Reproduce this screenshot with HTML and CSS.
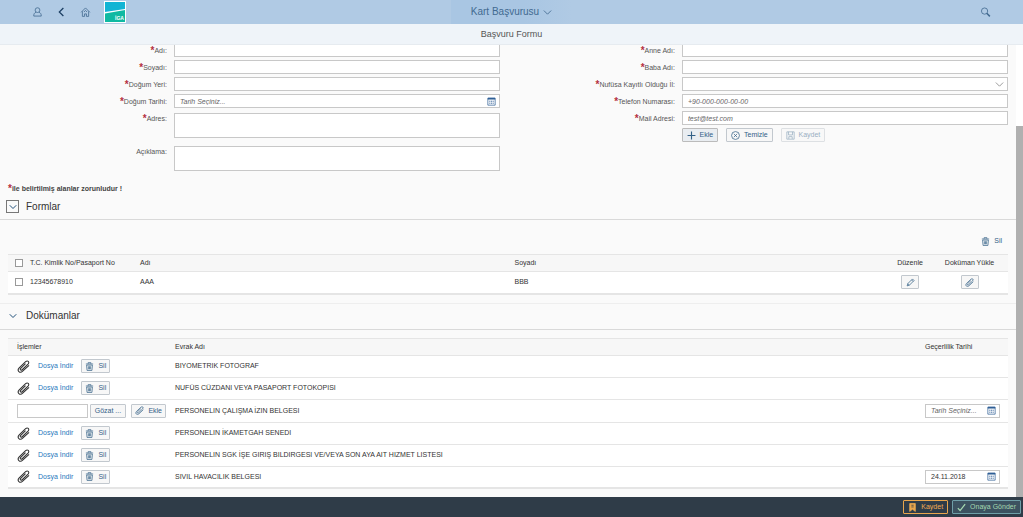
FILE: index.html
```html
<!DOCTYPE html>
<html lang="tr">
<head>
<meta charset="utf-8">
<title>Kart Başvurusu</title>
<link rel="stylesheet" href="styles.css">
</head>
<body>
<svg class="sprite" aria-hidden="true">
  <symbol id="clip" viewBox="0 0 16 16"><path d="M10.500 4.500 4.600 10.200c-1.500 1.700.2 3.300 1.800 1.800l7.200-7c2.400-2.600-.6-5-3-2.900L2.700 9.600c-3.300 3.500.8 7.300 4.300 4.200L14.800 6.500"/></symbol>
  <symbol id="trash" viewBox="0 0 16 16"><path d="M1.500 3.500h13M5.500 3V1.200h5V3M2.800 5.500l.9 9.500h8.600l.9-9.500zM6 7.500V13M8 7.500V13M10 7.500V13"/></symbol>
  <symbol id="cal" viewBox="0 0 16 16"><path d="M1.500 2h13v12.500h-13z"/><path d="M1.500 3h13" stroke-width="3"/><path d="M4 7.500h2M7 7.500h2M10 7.500h2M4 11h2M7 11h2M10 11h2" stroke-width="1.600"/></symbol>
  <symbol id="down" viewBox="0 0 16 16"><path d="m1.500 4.500 6.500 6.500 6.500-6.500"/></symbol>
</svg>
<header class="shell">
  <nav class="shell-nav">
    <button class="shell-btn" aria-label="Kullanıcı"><svg viewBox="0 0 16 16"><circle cx="8" cy="5" r="3.800"/><path d="M5.500 8.500C3 9.500 2 11 2 14.500h12c0-3.500-1-5-3.500-6"/></svg></button>
    <button class="shell-btn back" aria-label="Geri"><svg viewBox="0 0 16 16"><path d="M11 1.500 4.500 8l6.500 6.500"/></svg></button>
    <button class="shell-btn" aria-label="Ana sayfa"><svg viewBox="0 0 16 16"><path d="M1 8.500 8 1.500l7 7M3 7v8h3.500v-4h3v4H13V7M5.500 8 8 5.500 10.500 8"/></svg></button>
    <a class="logo" href="#" aria-label="İGA"><svg viewBox="0 0 22 22"><path fill="#fff" d="M0 0h22v22H0z"/><path fill="#12b4d4" d="M1 1h20v7L1 11z"/><path fill="#0fb9a2" d="M1 12.500 21 9v12H1z"/><text x="11" y="19">İGA</text></svg></a>
  </nav>
  <button class="app-title">Kart Başvurusu <svg><use href="#down"/></svg></button>
  <div class="shell-end"><button class="shell-btn" aria-label="Ara"><svg viewBox="0 0 16 16"><circle cx="6.500" cy="6.500" r="5"/><path d="m10 10 5 5" stroke-width="2.400"/></svg></button></div>
</header>
<h1 class="page-title">Başvuru Formu</h1>
<main class="content">
  <div class="page">
    <form class="form">
      <div class="form-col">
        <div class="field"><label class="req" for="ad">Adı:</label><input id="ad"></div>
        <div class="field"><label class="req" for="soyad">Soyadı:</label><input id="soyad"></div>
        <div class="field"><label class="req" for="yer">Doğum Yeri:</label><input id="yer"></div>
        <div class="field"><label class="req" for="tarih">Doğum Tarihi:</label><span class="combo"><input id="tarih" placeholder="Tarih Seçiniz..."><svg class="icon"><use href="#cal"/></svg></span></div>
        <div class="field tall"><label class="req" for="adres">Adres:</label><textarea id="adres"></textarea></div>
        <div class="field tall"><label for="aciklama">Açıklama:</label><textarea id="aciklama"></textarea></div>
      </div>
      <div class="form-col">
        <div class="field"><label class="req" for="anne">Anne Adı:</label><input id="anne"></div>
        <div class="field"><label class="req" for="baba">Baba Adı:</label><input id="baba"></div>
        <div class="field"><label class="req" for="il">Nufüsa Kayıtlı Olduğu İl:</label><span class="combo"><select id="il"><option></option></select><svg class="icon gray"><use href="#down"/></svg></span></div>
        <div class="field"><label class="req" for="tel">Telefon Numarası:</label><input id="tel" placeholder="+90-000-000-00-00"></div>
        <div class="field"><label class="req" for="mail">Mail Adresi:</label><input id="mail" placeholder="test@test.com"></div>
        <div class="form-actions">
          <button type="button" class="btn pressed"><svg class="icon" viewBox="0 0 16 16"><path d="M8 1v14M1 8h14" stroke-width="2"/></svg>Ekle</button>
          <button type="button" class="btn"><svg class="icon" viewBox="0 0 16 16"><circle cx="8" cy="8" r="7"/><path d="m5 5 6 6M11 5l-6 6"/></svg>Temizle</button>
          <button type="button" class="btn" disabled><svg class="icon" viewBox="0 0 16 16"><path d="M1.500 1.500h13v13h-13zM4.500 1.500V7h7V1.500M5 14v-4h6v4"/></svg>Kaydet</button>
        </div>
      </div>
    </form>
    <p class="note req">ile belirtilmiş alanlar zorunludur !</p>

    <section class="panel">
      <h2 class="panel-head"><button class="toggle focused" aria-label="Formlar panelini kapat"><svg><use href="#down"/></svg></button>Formlar</h2>
      <div class="toolbar"><button class="btn flat"><svg class="icon"><use href="#trash"/></svg>Sil</button></div>
      <table class="table forms">
        <thead><tr><th class="c-check"><input type="checkbox" aria-label="Tümünü seç"></th><th class="c-id">T.C. Kimlik No/Pasaport No</th><th>Adı</th><th>Soyadı</th><th class="c-edit">Düzenle</th><th class="c-upload">Doküman Yükle</th></tr></thead>
        <tbody><tr><td class="c-check"><input type="checkbox" aria-label="Satırı seç"></td><td>12345678910</td><td>AAA</td><td>BBB</td><td class="c-edit"><button class="btn small" aria-label="Düzenle"><svg class="icon" viewBox="0 0 16 16"><path d="m2 14 1.200-4L11.500 1.700l2.800 2.800L6 12.800zM3.200 10 6 12.800M10 3.500l2.500 2.500"/></svg></button></td><td class="c-upload"><button class="btn small" aria-label="Doküman Yükle"><svg class="icon"><use href="#clip"/></svg></button></td></tr></tbody>
      </table>
    </section>

    <section class="panel second">
      <h2 class="panel-head"><button class="toggle" aria-label="Dokümanlar panelini kapat"><svg><use href="#down"/></svg></button>Dokümanlar</h2>
      <table class="table docs">
        <thead><tr><th class="c-ops">İşlemler</th><th>Evrak Adı</th><th class="c-date">Geçerlilik Tarihi</th></tr></thead>
        <tbody>
          <tr><td><div class="ops"><svg class="file"><use href="#clip"/></svg><a href="#">Dosya İndir</a><button class="btn"><svg class="icon"><use href="#trash"/></svg>Sil</button></div></td><td>BIYOMETRIK FOTOGRAF</td><td></td></tr>
          <tr><td><div class="ops"><svg class="file"><use href="#clip"/></svg><a href="#">Dosya İndir</a><button class="btn"><svg class="icon"><use href="#trash"/></svg>Sil</button></div></td><td>NUFÜS CÜZDANI VEYA PASAPORT FOTOKOPISI</td><td></td></tr>
          <tr class="upload"><td><div class="ops"><input aria-label="Dosya"><button class="btn browse">Gözat ...</button><button class="btn"><svg class="icon"><use href="#clip"/></svg>Ekle</button></div></td><td>PERSONELIN ÇALIŞMA İZIN BELGESI</td><td><span class="combo"><input aria-label="Geçerlilik Tarihi" placeholder="Tarih Seçiniz..."><svg class="icon"><use href="#cal"/></svg></span></td></tr>
          <tr><td><div class="ops"><svg class="file"><use href="#clip"/></svg><a href="#">Dosya İndir</a><button class="btn"><svg class="icon"><use href="#trash"/></svg>Sil</button></div></td><td>PERSONELIN İKAMETGAH SENEDI</td><td></td></tr>
          <tr><td><div class="ops"><svg class="file"><use href="#clip"/></svg><a href="#">Dosya İndir</a><button class="btn"><svg class="icon"><use href="#trash"/></svg>Sil</button></div></td><td>PERSONELIN SGK İŞE GIRIŞ BILDIRGESI VE/VEYA SON AYA AIT HIZMET LISTESI</td><td></td></tr>
          <tr><td><div class="ops"><svg class="file"><use href="#clip"/></svg><a href="#">Dosya İndir</a><button class="btn"><svg class="icon"><use href="#trash"/></svg>Sil</button></div></td><td>SIVIL HAVACILIK BELGESI</td><td><span class="combo"><input aria-label="Geçerlilik Tarihi" value="24.11.2018"><svg class="icon"><use href="#cal"/></svg></span></td></tr>
        </tbody>
      </table>
    </section>
  </div>
  <div class="scrollbar"><div class="thumb"></div></div>
</main>
<footer class="footer">
  <button class="btn save"><svg class="icon" viewBox="0 0 16 16"><path d="M3 1h10v14l-5-4-5 4z" fill="#e9a54c"/><path d="M6 4h4M6 7h4" stroke="#2f3c48"/></svg>Kaydet</button>
  <button class="btn send"><svg class="icon" viewBox="0 0 16 16"><path d="m1.500 9 4 4.500L14.500 2" stroke-width="2.200"/></svg>Onaya Gönder</button>
</footer>
</body>
</html>
```
FILE: styles.css
```css
:root {
  --text: 7px;
  --blue: #346187;
  --line: #e5e5e5;
}
* { box-sizing: border-box; }
body {
  margin: 0;
  height: 100vh;
  display: flex;
  flex-direction: column;
  background: #fafafa;
  color: #333;
  font: var(--text)/10px "Liberation Sans", Arial, sans-serif;
}
button, input, select, textarea { font: inherit; color: inherit; margin: 0; }
svg { fill: none; stroke: currentColor; stroke-width: 1.3; }
.sprite { display: none; }

.shell {
  display: grid;
  grid-template-columns: 1fr auto 1fr;
  align-items: center;
  flex: none;
  height: 24px;
  background: #b0cae4;
  color: #426a90;
}
.shell-nav { display: flex; align-items: center; gap: 13px; padding-left: 32px; }
.shell-end { display: flex; justify-content: flex-end; padding-right: 32px; }
.shell-btn { display: flex; padding: 0; border: 0; background: none; }
.shell-btn svg { width: 11px; height: 10px; }
.back { color: #1d3f63; }
.back svg { stroke-width: 2; }
.logo svg { display: block; width: 22px; height: 22px; stroke: none; }
.logo text { fill: #fff; font-size: 5px; font-weight: bold; }
.app-title {
  display: flex;
  align-items: center;
  gap: 4px;
  height: 24px;
  padding: 0 20px;
  border: 0;
  background: linear-gradient(90deg, #a9c6e3 60%, #b0cae4);
  font-size: 10px;
}
.app-title svg { width: 9px; height: 9px; stroke-width: 1.5; }
.page-title {
  flex: none;
  height: 21px;
  margin: 0;
  background: #eff4f9;
  border-bottom: 1px solid #e6ebf0;
  color: #555;
  font-size: 9px;
  font-weight: normal;
  line-height: 20px;
  text-align: center;
}

.content { display: flex; flex: 1; min-height: 0; overflow: hidden; }
.page { flex: 1; min-width: 0; }
.scrollbar { display: flex; flex: none; width: 7px; padding-top: 81px; background: #fff; }
.thumb { flex: 1; background: #b0b0b0; }

.form { display: grid; grid-template-columns: 1fr 1fr; margin-top: -2px; }
.form-col { display: flex; flex-direction: column; gap: 3px; padding-right: 8px; }
.field { display: grid; grid-template-columns: 8fr 15fr; }
.field label { padding: 3px 7px 0 0; color: #555; text-align: right; }
.req::before {
  content: "*";
  color: #b5303f;
  font-size: 10px;
  font-weight: bold;
  line-height: 8px;
  vertical-align: -1px;
}
input, select, textarea {
  width: 100%;
  min-width: 0;
  height: 14px;
  padding: 0 5px;
  border: 1px solid #c8c8c8;
  border-radius: 0;
  background: #fff;
  outline: 0;
  appearance: none;
}
::placeholder { color: #666; font-style: italic; opacity: 1; }
textarea { display: block; height: 25px; resize: none; }
.tall { padding: 2px 0 3px; }
.tall label { padding-top: 1px; }
.combo { display: grid; align-items: center; }
.combo > * { grid-area: 1 / 1; }
.icon { flex: none; width: 9px; height: 9px; }
.combo .icon { justify-self: end; margin-right: 4px; color: #2f5f96; pointer-events: none; }
.combo .gray { color: #777; }
.form-actions {
  display: grid;
  grid-template-columns: 36px 47px 44px;
  column-gap: 8px;
  padding-left: calc(100% * 8 / 23);
}

.btn {
  display: inline-flex;
  align-items: center;
  justify-content: center;
  gap: 4px;
  height: 14px;
  padding: 0 4px;
  border: 1px solid #c2c8ce;
  border-radius: 1px;
  background: #f7f7f7;
  color: var(--blue);
  white-space: nowrap;
}
.pressed { background: #e9edf1; border-color: #bbb; }
.btn:disabled { opacity: 0.5; }
.flat { border: 0; background: none; }
.small { width: 18px; padding: 0; }
.note { margin: 10px 0 0 8px; color: #444; font-weight: bold; line-height: 10px; }

.panel-head {
  display: flex;
  align-items: center;
  gap: 7px;
  height: 26px;
  margin: 0;
  padding-left: 6px;
  border-bottom: 1px solid #d9d9d9;
  font-size: 10px;
  font-weight: normal;
}
.toggle { display: flex; align-items: center; justify-content: center; width: 13px; height: 13px; padding: 0; border: 1px solid transparent; background: none; color: #1f4e79; }
.toggle svg { width: 8px; height: 8px; stroke-width: 2; }
.focused { border-color: #777; }
.toolbar { display: flex; justify-content: flex-end; padding: 14px 10px 6px; }
.second { margin-top: 8px; border-top: 1px solid #eee; }
.second .table { margin-top: 8px; }

.table {
  width: calc(100% - 16px);
  margin: 0 8px;
  table-layout: fixed;
  border-collapse: collapse;
  border-top: 1px solid var(--line);
  border-bottom: 2px solid var(--line);
  background: #fff;
}
.table th, .table td { padding: 0; text-align: left; font-weight: normal; }
.table tr { height: 22px; border-bottom: 1px solid var(--line); }
.table thead tr { height: 17px; background: #f7f7f7; }
.forms .c-check { width: 22px; padding-left: 7px; }
.forms .c-id { width: 110px; }
.forms .c-edit { width: 42px; text-align: center; }
.forms .c-upload { width: 77px; text-align: center; }
.table td .btn { vertical-align: middle; }
input[type="checkbox"] { display: block; width: 8px; height: 8px; padding: 0; border-color: #999; }
.docs th, .docs td { padding-left: 9px; }
.docs .c-ops { width: 158px; }
.docs .c-date { width: 92px; }
.docs .upload { height: 23px; }
.docs .combo { width: 75px; }
.ops { display: flex; align-items: center; }
.ops .btn { padding: 0 3px; }
.ops .file { width: 13px; height: 13px; margin-right: 8px; }
.ops a { color: #1f78bd; text-decoration: none; margin-right: 8px; }
.ops input { width: 71px; margin-right: 2px; }
.ops .browse { width: 37px; margin-right: 5px; }

.footer { display: flex; flex: none; align-items: center; justify-content: flex-end; gap: 4px; height: 20px; padding-right: 2px; background: #2f3c48; }
.save { border-color: #e9a54c; background: none; color: #f0ab52; }
.send { border-color: #6f9fa8; background: #3c5260; color: #a5d8b0; }
```
